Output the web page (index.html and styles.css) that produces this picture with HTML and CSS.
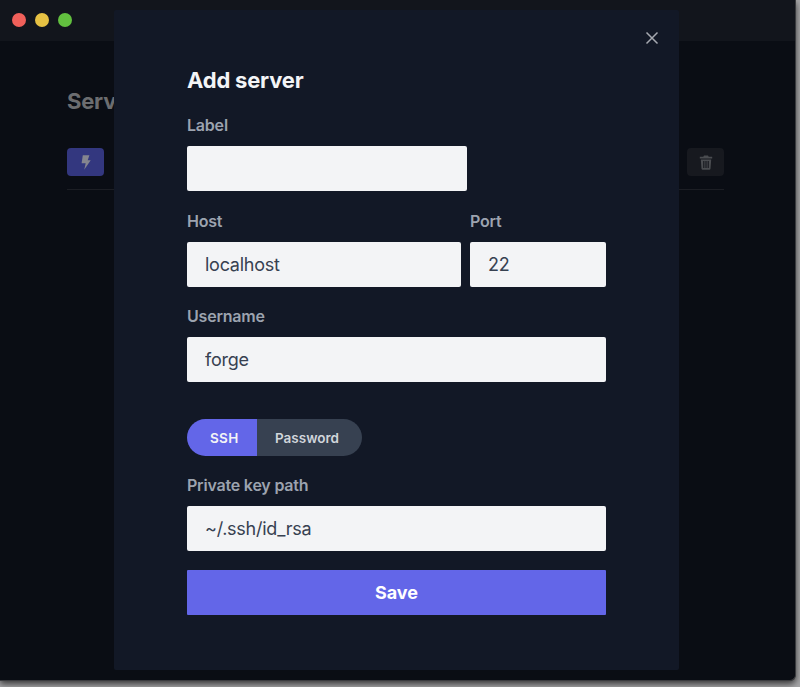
FILE: index.html
```html
<!DOCTYPE html>
<html lang="en">
<head>
<meta charset="utf-8">
<title>Add server</title>
<link rel="stylesheet" href="styles.css">
</head>
<body>
<div class="window">
  <header class="titlebar">
    <span class="dot dot-red"></span>
    <span class="dot dot-yellow"></span>
    <span class="dot dot-green"></span>
  </header>
  <main class="content">
    <h1 class="page-title">Servers</h1>
    <div class="server-row">
      <span class="icon-btn icon-btn-primary">
        <svg width="10" height="15" viewBox="0 0 10 15"><path d="M1.800 0.300h6.600L6.700 5.200h3L3.200 14.700 4.700 8.200H0.600z" fill="#85858f"/></svg>
      </span>
      <span class="icon-btn icon-btn-muted">
        <svg width="14" height="15" viewBox="0 0 14 15"><path d="M5 .6h4l.7 1.200H13.200v1.600H.8V1.800h3.500zM1.800 4.400h10.400l-.7 9.300a1.200 1.200 0 0 1-1.200 1H3.700a1.200 1.200 0 0 1-1.200-1zM4.200 6v7h1.200V6zM6.400 6v7h1.200V6zM8.600 6v7h1.200V6z" fill="#4a4c50" fill-rule="evenodd"/></svg>
      </span>
    </div>
  </main>
  <section class="modal">
    <button class="close" type="button" aria-label="Close">
      <svg width="14" height="14" viewBox="0 0 14 14"><path d="M1.500 1.500l11 11M12.500 1.500l-11 11" stroke="#a6a9b0" stroke-width="1.500" fill="none"/></svg>
    </button>
    <form class="form">
      <h2 class="modal-title">Add server</h2>
      <div class="field field-label">
        <label class="label">Label</label>
        <input class="input" type="text" value="">
      </div>
      <div class="field-row">
        <div class="field field-host">
          <label class="label">Host</label>
          <input class="input" type="text" value="localhost">
        </div>
        <div class="field field-port">
          <label class="label">Port</label>
          <input class="input" type="text" value="22">
        </div>
      </div>
      <div class="field">
        <label class="label">Username</label>
        <input class="input" type="text" value="forge">
      </div>
      <div class="toggle">
        <span class="toggle-item toggle-active">SSH</span>
        <span class="toggle-item toggle-idle">Password</span>
      </div>
      <div class="field field-key">
        <label class="label">Private key path</label>
        <input class="input" type="text" value="~/.ssh/id_rsa">
      </div>
      <button class="save" type="button">Save</button>
    </form>
  </section>
</div>
</body>
</html>
```

FILE: styles.css
```css
* { box-sizing: border-box; }
html, body { margin: 0; height: 100%; }
body {
  width: 800px;
  height: 687px;
  overflow: hidden;
  background: #a5a5a7;
  font-family: Inter, "Liberation Sans", sans-serif;
}
.window {
  position: relative;
  width: 796px;
  height: 681px;
  background: #0a0d14;
  border-right: 1px solid #3a3b3e;
  border-bottom: 1px solid #3a3b3e;
  border-bottom-right-radius: 6px;
  box-shadow: 0 3px 6px rgba(0, 0, 0, 0.65);
  overflow: hidden;
  display: flex;
  flex-direction: column;
}
.titlebar {
  height: 41px;
  flex: none;
  background: #12151c;
  display: flex;
  align-items: center;
  gap: 9px;
  padding: 0 0 2px 12px;
}
.dot { width: 14px; height: 14px; border-radius: 50%; }
.dot-red { background: #f0605a; }
.dot-yellow { background: #e6c143; }
.dot-green { background: #62c03f; }
.content {
  flex: 1;
  padding: 47px 71px 0 67px;
}
.page-title {
  margin: 0;
  font-size: 22px;
  line-height: 27px;
  font-weight: 700;
  color: #6c6d70;
  letter-spacing: -0.2px;
}
.server-row {
  margin-top: 33px;
  border-bottom: 1px solid #1c1e24;
  display: flex;
  justify-content: space-between;
  padding-bottom: 13px;
}
.icon-btn {
  width: 37px;
  height: 28px;
  border-radius: 4px;
  display: flex;
  align-items: center;
  justify-content: center;
}
.icon-btn-primary { background: #33377f; }
.icon-btn-muted { background: #17191f; }
.modal {
  position: absolute;
  left: 114px;
  top: 10px;
  width: 565px;
  height: 660px;
  background: #121826;
  border-radius: 2px;
  padding: 57px 73px 0;
}
.close {
  position: absolute;
  top: 21px;
  right: 20px;
  width: 14px;
  height: 14px;
  padding: 0;
  border: 0;
  background: none;
  display: flex;
}
.form { display: flex; flex-direction: column; }
.modal-title {
  margin: 0 0 21px;
  font-size: 22px;
  line-height: 27px;
  font-weight: 700;
  color: #f3f4f6;
  letter-spacing: -0.2px;
}
.field { display: flex; flex-direction: column; margin-bottom: 20px; }
.field-label .input { width: 280px; }
.label {
  font-size: 16px;
  line-height: 20px;
  font-weight: 600;
  color: #9ca3af;
  margin-bottom: 11px;
  letter-spacing: -0.2px;
}
.input {
  height: 45px;
  width: 100%;
  border: 0;
  border-radius: 2px;
  background: #f3f4f6;
  padding: 0 18px;
  font: 400 18px Inter, "Liberation Sans", sans-serif;
  letter-spacing: -0.25px;
  color: #374151;
  outline: none;
}
.field-row { display: flex; gap: 9px; }
.field-row .field { margin-bottom: 19px; }
.field-host { width: 274px; }
.field-port { width: 136px; }
.toggle {
  display: flex;
  align-self: flex-start;
  height: 37px;
  margin: 17px 0 19px;
  border-radius: 19px;
  overflow: hidden;
  font-size: 13.5px;
  font-weight: 600;
}
.toggle-item { display: flex; align-items: center; }
.toggle-active {
  width: 70px;
  padding-left: 23px;
  letter-spacing: 0.3px;
  background: #6366e8;
  color: #f3f4f6;
}
.toggle-idle {
  width: 105px;
  padding-left: 18px;
  background: #374151;
  color: #d1d5db;
}
.field-key { margin-bottom: 19px; }
.save {
  height: 45px;
  border: 0;
  border-radius: 1px;
  background: #6366e8;
  color: #fff;
  font: 700 18px Inter, "Liberation Sans", sans-serif;
}
```
